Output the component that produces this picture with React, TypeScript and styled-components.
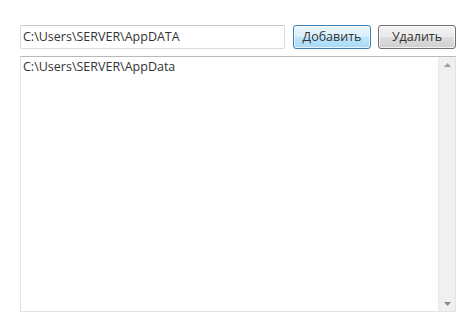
import React from "react";
import styled, { createGlobalStyle } from "styled-components";

const Global = createGlobalStyle`
  html, body { margin: 0; padding: 0; background: #ffffff; }
  body { font-family: "Open Sans", "Noto Sans", sans-serif; }
`;

const Page = styled.div`
  width: 475px;
  height: 334px;
  box-sizing: border-box;
  padding: 25px 0 0 20px;
  display: flex;
  flex-direction: column;
  gap: 7px;
`;

const Toolbar = styled.div`
  display: flex;
  align-items: stretch;
  height: 24px;
`;

const PathInput = styled.div`
  box-sizing: border-box;
  width: 265px;
  height: 24px;
  border: 1px solid #dcdcdc;
  border-top-color: #c8c8c8;
  border-radius: 2px;
  padding: 0 0 1px 2px;
  display: flex;
  align-items: center;
  font-size: 12.5px;
  color: #333;
  margin-right: 8px;
`;

const Button = styled.button<{ $primary?: boolean }>`
  box-sizing: border-box;
  width: 78px;
  height: 24px;
  margin: 0 7px 0 0;
  padding: 0 0 1px;
  font-family: "Open Sans", "Noto Sans", sans-serif;
  font-size: 12.5px;
  color: #333;
  border-radius: 3px;
  border: 1px solid ${(p) => (p.$primary ? "#3c7fb1" : "#707070")};
  background: ${(p) =>
    p.$primary
      ? "linear-gradient(to bottom, #eaf6fd 0%, #d9f0fc 50%, #bee6fd 51%, #a7d9f5 100%)"
      : "linear-gradient(to bottom, #f2f2f2 0%, #ebebeb 50%, #dddddd 51%, #cfcfcf 100%)"};
  box-shadow: inset 0 0 0 1px rgba(255, 255, 255, 0.7);
`;

const ListBox = styled.div`
  box-sizing: border-box;
  width: 436px;
  height: 256px;
  border: 1px solid #e2e3ea;
  border-top-color: #b9b9b9;
  display: flex;
`;

const Items = styled.div`
  flex: 1;
  padding: 1px 0 0 2px;
  font-size: 12.5px;
  color: #333;
`;

const ScrollBar = styled.div`
  width: 17px;
  background: #f0f0f0;
  border-left: 1px solid #e8e8e8;
  display: flex;
  flex-direction: column;
  justify-content: space-between;
  align-items: center;
  padding: 6px 0 5px;
  box-sizing: border-box;
`;

const Arrow = ({ down }: { down?: boolean }) => (
  <svg width="7" height="4" viewBox="0 0 7 4" style={{ display: "block" }}>
    {down ? (
      <path d="M0 0H7L3.5 4Z" fill="#8a8a8a" />
    ) : (
      <path d="M0 4H7L3.5 0Z" fill="#a0a0a0" />
    )}
  </svg>
);

export default function App() {
  return (
    <>
      <Global />
      <Page>
        <Toolbar>
          <PathInput>C:\Users\SERVER\AppDATA</PathInput>
          <Button $primary>Добавить</Button>
          <Button>Удалить</Button>
        </Toolbar>
        <ListBox>
          <Items>C:\Users\SERVER\AppData</Items>
          <ScrollBar>
            <Arrow />
            <Arrow down />
          </ScrollBar>
        </ListBox>
      </Page>
    </>
  );
}
